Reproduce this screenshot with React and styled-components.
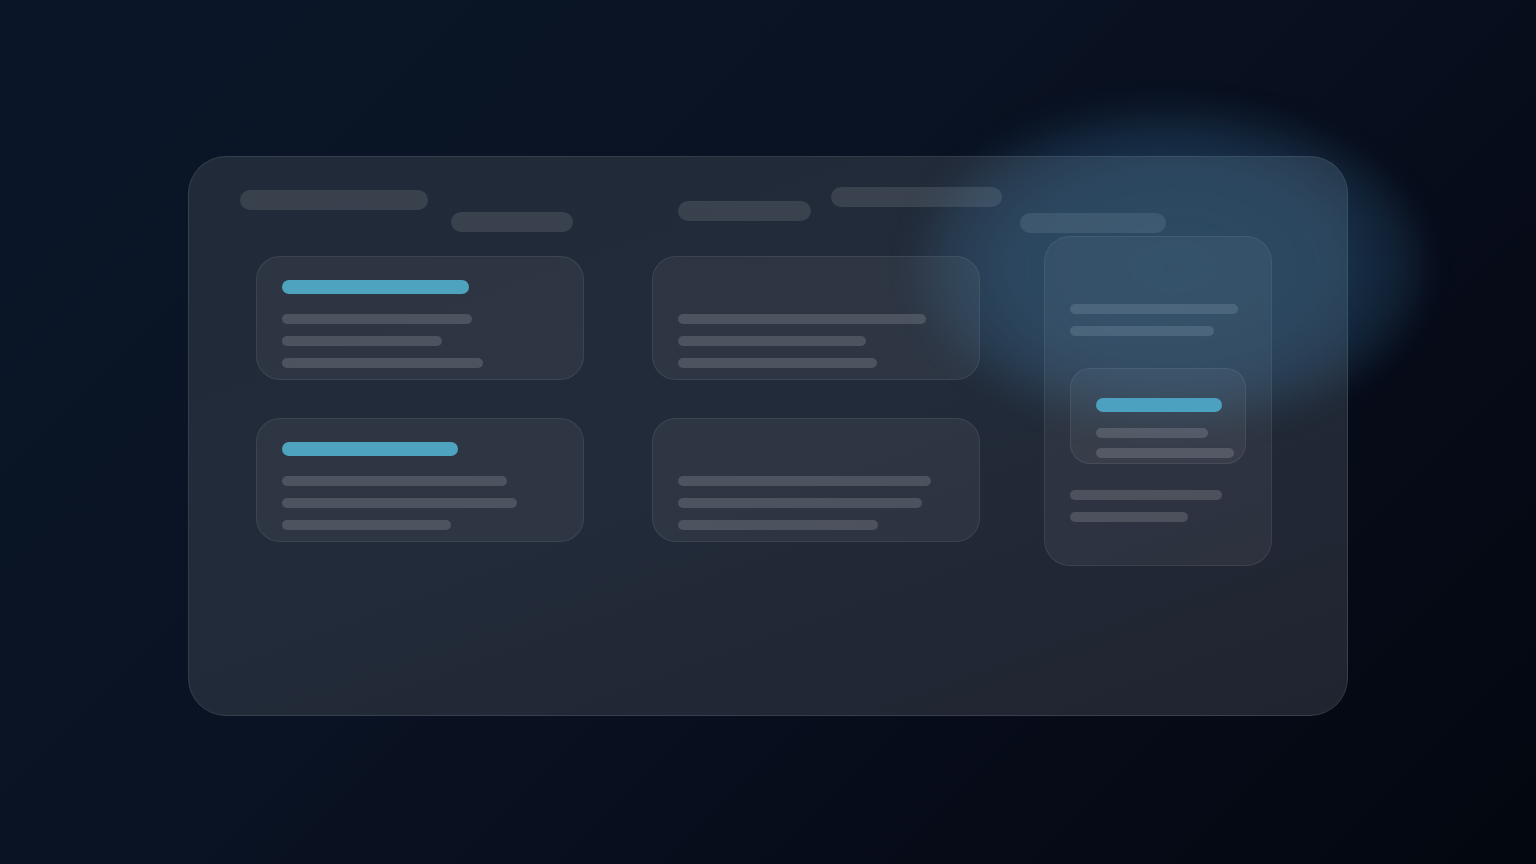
import React from "react";
import styled, { createGlobalStyle } from "styled-components";

const Global = createGlobalStyle`
  html, body { margin: 0; padding: 0; }
  body {
    font-family: "Inter", "Liberation Sans", sans-serif;
    background: #080f1d;
    overflow: hidden;
  }
`;

const Page = styled.div`
  position: relative;
  width: 1536px;
  height: 864px;
  box-sizing: border-box;
  padding: 156px 0 0 188px;
  background: linear-gradient(135deg, #0a1628 0%, #0a1324 40%, #070c1a 70%, #03070f 100%);
  overflow: hidden;
`;

const Panel = styled.div`
  width: 1160px;
  height: 560px;
  box-sizing: border-box;
  border-radius: 38px;
  border: 1px solid rgba(255, 255, 255, 0.1);
  background: linear-gradient(160deg, #212a38 0%, #222b3a 50%, #20242f 100%);
  padding: 30px 0 0 51px;
  display: flex;
  flex-direction: column;
`;

const Header = styled.div`
  display: flex;
  align-items: flex-start;
  height: 49px;
`;

const Pill = styled.div`
  height: 20px;
  border-radius: 10px;
  width: ${(p) => p.$w}px;
  margin-left: ${(p) => p.$ml || 0}px;
  margin-top: ${(p) => p.$mt || 0}px;
  background: rgba(255, 255, 255, 0.11);
  flex-shrink: 0;
`;

const Body = styled.div`
  display: flex;
  align-items: flex-start;
  padding-left: 16px;
`;

const Grid = styled.div`
  display: grid;
  grid-template-columns: 328px 328px;
  column-gap: 68px;
  row-gap: 38px;
  margin-top: 20px;
`;

const Card = styled.div`
  box-sizing: border-box;
  height: 124px;
  border-radius: 24px;
  border: 1px solid rgba(255, 255, 255, 0.08);
  background: rgba(255, 255, 255, 0.055);
  padding: 23px 25px 0;
  display: flex;
  flex-direction: column;
`;

const TallCard = styled.div`
  box-sizing: border-box;
  width: 228px;
  height: 330px;
  margin-left: 64px;
  border-radius: 26px;
  border: 1px solid rgba(255, 255, 255, 0.08);
  background: rgba(255, 255, 255, 0.055);
  padding: 67px 25px 0;
  display: flex;
  flex-direction: column;
`;

const InnerCard = styled.div`
  box-sizing: border-box;
  width: 176px;
  height: 96px;
  margin-top: 32px;
  margin-bottom: 26px;
  border-radius: 20px;
  border: 1px solid rgba(255, 255, 255, 0.08);
  background: rgba(255, 255, 255, 0.05);
  padding: 29px 25px 0;
  display: flex;
  flex-direction: column;
`;

const Accent = styled.div`
  height: 14px;
  border-radius: 7px;
  width: ${(p) => p.$w}px;
  background: ${(p) => (p.$hidden ? "transparent" : "#4ea3bf")};
  margin-bottom: ${(p) => p.$mb}px;
  flex-shrink: 0;
`;

const Line = styled.div`
  height: 10px;
  border-radius: 5px;
  width: ${(p) => p.$w}px;
  background: rgba(255, 255, 255, 0.15);
  margin-bottom: ${(p) => (p.$gap === undefined ? 12 : p.$gap)}px;
  flex-shrink: 0;
`;

const Glow = styled.div`
  position: absolute;
  left: 910px;
  top: 102px;
  width: 516px;
  height: 330px;
  border-radius: 50%;
  pointer-events: none;
  background: radial-gradient(
    ellipse at 51% 50%,
    rgba(72, 150, 200, 0.3) 0%,
    rgba(72, 150, 200, 0.26) 45%,
    rgba(72, 150, 200, 0.14) 62%,
    rgba(72, 150, 200, 0) 72%
  );
  filter: blur(14px);
`;

const cards = [
  { accent: 187, lines: [190, 160, 201] },
  { accent: null, lines: [248, 188, 199] },
  { accent: 176, lines: [225, 235, 169] },
  { accent: null, lines: [253, 244, 200] },
];

export default function App() {
  return (
    <>
      <Global />
      <Page>
        <Panel>
          <Header>
            <Pill $w={188} $mt={3} />
            <Pill $w={122} $ml={23} $mt={25} />
            <Pill $w={133} $ml={105} $mt={14} />
            <Pill $w={171} $ml={20} $mt={0} />
            <Pill $w={146} $ml={18} $mt={26} />
          </Header>
          <Body>
            <Grid>
              {cards.map((c, i) => (
                <Card key={i}>
                  <Accent $w={c.accent || 100} $hidden={!c.accent} $mb={20} />
                  {c.lines.map((w, j) => (
                    <Line key={j} $w={w} />
                  ))}
                </Card>
              ))}
            </Grid>
            <TallCard>
              <Line $w={168} />
              <Line $w={144} $gap={0} />
              <InnerCard>
                <Accent $w={126} $mb={16} />
                <Line $w={112} $gap={10} />
                <Line $w={138} $gap={0} />
              </InnerCard>
              <Line $w={152} />
              <Line $w={118} />
            </TallCard>
          </Body>
        </Panel>
        <Glow />
      </Page>
    </>
  );
}
